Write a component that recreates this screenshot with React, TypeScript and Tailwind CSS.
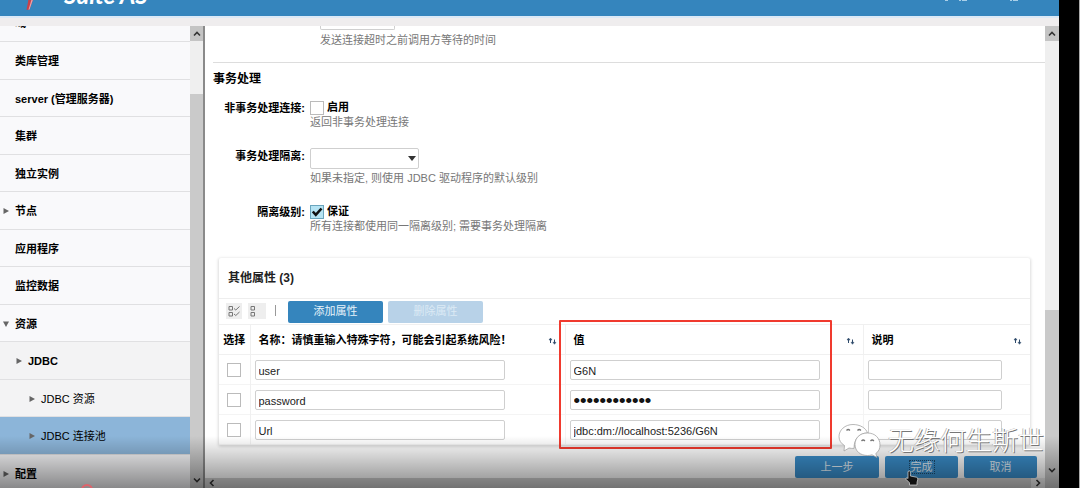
import React from "react";
import clsx from "clsx";

type NavItem = {
  label: string;
  level?: number;
  arrow?: "right" | "down";
  active?: boolean;
};

const navItems: NavItem[] = [
  { label: "类库管理" },
  { label: "server (管理服务器)" },
  { label: "集群" },
  { label: "独立实例" },
  { label: "节点", arrow: "right" },
  { label: "应用程序" },
  { label: "监控数据" },
  { label: "资源", arrow: "down" },
  { label: "JDBC", level: 1, arrow: "right" },
  { label: "JDBC 资源", level: 2, arrow: "right" },
  { label: "JDBC 连接池", level: 2, arrow: "right", active: true },
  { label: "配置", arrow: "right" },
];

const properties = [
  { name: "user", value: "G6N", type: "text" },
  { name: "password", value: "dmpassword12", type: "password" },
  { name: "Url", value: "jdbc:dm://localhost:5236/G6N", type: "text" },
];

const Triangle = ({ direction }: { direction?: "right" | "down" }) => (
  <svg viewBox="0 0 6 6" className="size-1.5 shrink-0" fill="#666">
    {direction === "right" && <path d="M0.5 0 6 3 0.5 6z" />}
    {direction === "down" && <path d="M0 0.5h6L3 6z" />}
  </svg>
);

const Chevron = ({ d }: { d: string }) => (
  <svg viewBox="0 0 8 8" className="size-2" fill="none" stroke="#333" strokeWidth="1.6">
    <path d={d} />
  </svg>
);

const SortIcon = () => (
  <svg viewBox="0 0 9 8" className="h-2 w-[9px]" fill="#2f4b6b" stroke="#2f4b6b" strokeWidth="1">
    <path d="M2.500 6V2.500M6.500 2.500V6" />
    <path d="M2.500 1 4 3H1zM6.500 7.300 5 5.300h3z" strokeWidth="0.5" />
  </svg>
);

type ScrollbarProps = { topClass: string; thumbClass: string; className?: string };

const Scrollbar = ({ topClass, thumbClass, className }: ScrollbarProps) => (
  <div className={clsx("flex shrink-0 flex-col bg-[#efefef]", className)}>
    <button aria-label="向上滚动" className="flex h-[15px] shrink-0 items-center justify-center bg-[#c4c4c4]">
      <Chevron d="M1 5.5 4 2.5l3 3" />
    </button>
    <div className={topClass} />
    <div className={clsx("bg-[#cacaca]", thumbClass)} />
    <button
      aria-label="向下滚动"
      className="mt-auto flex h-5 shrink-0 items-end justify-center bg-[#cacaca] pb-1"
    >
      <Chevron d="M1 2.5l3 3 3-3" />
    </button>
  </div>
);

const CheckBox = ({ label, checked }: { label: string; checked?: boolean }) => (
  <label className="flex h-[15px] items-center gap-[3px] font-bold text-black">
    <span className="relative size-3.5">
      <input
        type="checkbox"
        defaultChecked={checked}
        className="block size-3.5 appearance-none border border-[#bbb] bg-white checked:border-[#6aa5bd] checked:bg-[#b5e3f3]"
      />
      {checked && (
        <svg viewBox="0 0 14 14" className="pointer-events-none absolute inset-0" fill="none" stroke="#111" strokeWidth="2.6">
          <path d="M2.8 6.5 5.8 9.8 11.5 3.5" />
        </svg>
      )}
    </span>
    {label}
  </label>
);

const Hint = ({ children }: { children: React.ReactNode }) => (
  <p className="leading-[15px] text-[#777]">{children}</p>
);

const Field = ({ label, children }: { label: string; children: React.ReactNode }) => (
  <div className="flex items-start gap-[5px]">
    <span className="w-[100px] shrink-0 text-right font-bold leading-4 text-black">{label}</span>
    <div>{children}</div>
  </div>
);

const inputClass =
  "block h-5 rounded-[2px] border border-[#cfcfcf] bg-white px-[3px] pt-0.5 text-[11px] text-[#222]";

const PropertiesTable = () => (
  <table className="w-full table-fixed border-collapse text-left text-black">
    <colgroup>
      <col className="w-[31px]" />
      <col className="w-[315px]" />
      <col />
      <col className="w-[167px]" />
    </colgroup>
    <thead>
      <tr className="h-[30px] border-y border-[#f0f0f0]">
        <th className="pt-0.5 text-center">选择</th>
        {["名称：请慎重输入特殊字符，可能会引起系统风险！", "值", "说明"].map((title) => (
          <th key={title} className="border-l border-[#f0f0f0] pl-2 pr-2 pt-0.5">
            <span className="flex items-center justify-between whitespace-nowrap">
              {title}
              <button aria-label={`排序 ${title}`}>
                <SortIcon />
              </button>
            </span>
          </th>
        ))}
      </tr>
    </thead>
    <tbody>
      {properties.map((row) => (
        <tr key={row.name} className="h-[30px] border-b border-[#f4f4f4]">
          <td>
            <input
              type="checkbox"
              aria-label={`选择 ${row.name}`}
              className="mx-auto block size-3.5 appearance-none border border-[#bbb] bg-white"
            />
          </td>
          <td className="border-l border-[#f0f0f0] pl-1">
            <input aria-label="名称" defaultValue={row.name} className={clsx(inputClass, "w-[250px]")} />
          </td>
          <td className="border-l border-[#f4f4f4] pl-1">
            <input
              aria-label="值"
              type={row.type}
              defaultValue={row.value}
              className={clsx(
                inputClass,
                "w-[250px]",
                row.type === "password" && "font-['DejaVu_Sans',sans-serif] [-webkit-text-stroke:2px_#111]"
              )}
            />
          </td>
          <td className="border-l border-[#f4f4f4] pl-1">
            <input aria-label="说明" className={clsx(inputClass, "w-[134px]")} />
          </td>
        </tr>
      ))}
    </tbody>
  </table>
);

const Header = () => (
  <header className="shrink-0">
    <div className="flex h-4 items-end overflow-hidden bg-[#3585bd] pb-[11px] pl-6">
      <svg viewBox="0 0 12 20" className="-mb-1.5 h-5 w-3 shrink-0">
        <path d="M6 0h6L5.5 18.5 2.5 19z" fill="#c9404a" />
        <path d="M10 0h2L5.5 18.5l-1 .3z" fill="#e9a5ac" />
      </svg>
      <span className="ml-7 font-[Lato,sans-serif] text-[24px] font-bold italic leading-5 text-white">Suite AS</span>
      <svg viewBox="0 0 80 16" className="-mb-[11px] ml-auto mr-9 h-4 w-20 shrink-0" fill="#a9cfe8">
        <path d="M2 0h3v1H2zM16 0h2v1h-2zM19 0h5v1h-5zM67 0h2v1h-2zM70 0h5v1h-5z" />
      </svg>
    </div>
    <div className="h-0.5 bg-[#dbe9f7]" />
    <div className="h-2 bg-[#efedee]" />
  </header>
);

const Sidebar = () => (
  <nav className="w-[190px] shrink-0 overflow-hidden bg-[#f9f9fb]">
    <div className="flex h-4 items-end overflow-hidden border-b border-[#e0e0e2] pb-[10px] pl-[15px] font-bold leading-[15px]">
      域
    </div>
    <ul className="flex h-[450px] flex-col">
      {navItems.map((item) => (
        <li
          key={item.label}
          className={clsx(
            "flex-1 border-b border-[#e0e0e2]",
            item.level && !item.active && "bg-[#f3f3f4]",
            item.active && "bg-[#8cb5d9]"
          )}
        >
          <a
            href="#"
            className={clsx(
              "flex h-full items-center pt-0.5 text-black",
              item.level === 1 && "gap-1.5 pl-4 font-bold",
              item.level === 2 && "gap-1.5 pl-[29px] text-[#222]",
              !item.level && "gap-1.5 pl-[3px] font-bold"
            )}
          >
            <Triangle direction={item.arrow} />
            {item.label}
          </a>
        </li>
      ))}
    </ul>
  </nav>
);

const Watermark = () => (
  <div className="pointer-events-none absolute bottom-[29px] right-[36px] flex items-end gap-1.5">
    <svg viewBox="0 0 44 36" className="h-9 w-11" fill="#fff" stroke="#999" strokeWidth="0.7">
      <path d="M15 1.500C7 1.500 1 7 1 13.500c0 4 2 7 5.500 9L6 28l5-3c2 .4 3 .5 5 .4C16 15 22 10 29.500 10 28 5 22 1.500 15 1.500z" />
      <path d="M29.500 10C22 10 17 14.800 17 21.500s5.500 11 12.500 11c1.600 0 3-.2 4.500-.7l5 2.700-1.200-4c3-2 4.200-5 4.200-8.500C42 15 37 10 29.500 10z" />
      <path
        d="M8.500 7.500q1.700-2 3.400 0M19.500 7.500q1.700-2 3.400 0M23.500 18q1.700-2 3.400 0M32.500 18q1.700-2 3.400 0"
        fill="none"
        stroke="#777"
        strokeWidth="1.3"
      />
    </svg>
    <span className="text-[26px] font-light leading-9 text-white [text-shadow:1px_1px_0_#777,-1px_0_0_#bbb]">
      无缘何生斯世
    </span>
  </div>
);

const HandCursor = () => (
  <svg viewBox="0 0 14 16" className="pointer-events-none absolute left-5 top-3.5 z-10 h-4 w-3.5" fill="#111" stroke="#ddd" strokeWidth="0.7">
    <path d="M3 1.500q1.200-1.200 2.400 0V6l6 1.200q1.600.4 1.400 2L12 12.500V15H4.500v-2.200L1 9.300q-.3-1.600 1-1.600l1 .8z" />
  </svg>
);

const footerButton = "h-[22px] rounded-[2px] bg-[#3a8ecb] pt-px text-[#e4f0f8]";

const App: React.FC = () => {
  return (
    <div className="relative flex h-screen overflow-hidden bg-black font-['Liberation_Sans','Noto_Sans_CJK_SC',sans-serif] text-[11px]">
      <div className="flex min-w-0 flex-1 flex-col bg-white">
        <Header />
        <div className="flex min-h-0 flex-1">
          <Sidebar />
          <Scrollbar className="w-[13px]" topClass="h-[53px] shrink-0" thumbClass="min-h-0 flex-1" />
          <div className="w-0.5 shrink-0 bg-[#8a8a8a]" />

          <div className="flex min-w-0 flex-1 flex-col">
            <main className="min-h-0 flex-1 overflow-hidden">
              <div className="ml-[115px] h-1 w-[75px] rounded-b-[2px] border border-t-0 border-[#cfcfcf]" />
              <div className="mb-3.5 ml-[115px] mt-[3px]">
                <Hint>发送连接超时之前调用方等待的时间</Hint>
              </div>
              <hr className="ml-2 border-[#ddd]" />
              <h2 className="mt-2 pl-2 text-[12px] font-bold leading-4 text-black">事务处理</h2>

              <div className="mt-[13px] flex flex-col gap-[18px]">
                <Field label="非事务处理连接:">
                  <CheckBox label="启用" />
                  <Hint>返回非事务处理连接</Hint>
                </Field>
                <Field label="事务处理隔离:">
                  <div className="relative mb-0.5 w-[109px]">
                    <select
                      aria-label="事务处理隔离"
                      className="block h-[21px] w-full appearance-none rounded-[2px] border border-[#cfcfcf] bg-white"
                    />
                    <svg viewBox="0 0 8 5" className="pointer-events-none absolute right-[3px] top-2 h-[5px] w-2" fill="#333">
                      <path d="M0 0h8L4 5z" />
                    </svg>
                  </div>
                  <Hint>如果未指定, 则使用 JDBC 驱动程序的默认级别</Hint>
                </Field>
                <Field label="隔离级别:">
                  <CheckBox label="保证" checked />
                  <Hint>所有连接都使用同一隔离级别; 需要事务处理隔离</Hint>
                </Field>
              </div>

              <section className="relative ml-3.5 mr-[15px] mt-6 rounded-[2px] bg-white shadow-[0_1px_3px_1px_#ddd]">
                <h3 className="flex h-10 items-center pl-[9px] text-[12px] font-bold text-[#222]">其他属性 (3)</h3>
                <div className="flex h-[26px] items-center border-t border-[#eee] pl-[7px]">
                  <button aria-label="全选" className="mb-0.5 flex size-4 items-center justify-center bg-[#eee]">
                    <svg viewBox="0 0 12 12" className="size-3" fill="none" stroke="#777" strokeWidth="1">
                      <path d="M1 1.500h3.500V5H1zM1 7.500h3.500V11H1zM6 3.500 7.800 5 11.500 1.500M6 9l1.800 1.500 3.700-3.500" />
                    </svg>
                  </button>
                  <button aria-label="取消全选" className="mb-0.5 ml-1.5 flex h-4 w-[18px] items-center bg-[#eee] pl-0.5">
                    <svg viewBox="0 0 12 12" className="size-3" fill="none" stroke="#777" strokeWidth="1">
                      <path d="M1 1.500h3.500V5H1zM1 7.500h3.500V11H1z" />
                    </svg>
                  </button>
                  <div className="mb-0.5 ml-[9px] h-[11px] w-px bg-[#999]" />
                  <button className="ml-3 h-[22px] w-[95px] rounded-[2px] bg-[#3585bd] text-[#e8f3fa]">添加属性</button>
                  <button disabled className="ml-[5px] h-[22px] w-[95px] rounded-[2px] bg-[#b8d2e8] text-[#dceaf5]">
                    删除属性
                  </button>
                </div>
                <PropertiesTable />
                {/* highlight around the value column */}
                <div className="pointer-events-none absolute -bottom-1 left-[340px] right-[198px] top-[62px] rounded-[1px] border-2 border-[#f03a2e]" />
              </section>
            </main>

            <footer className="flex shrink-0 justify-end gap-1.5 pr-2">
              <button className={clsx(footerButton, "w-[84px]")}>上一步</button>
              <div className="relative">
                <button className={clsx(footerButton, "w-[73px]")}>
                  <span className="px-px outline-1 outline-dotted outline-[#1d4a6b]">完成</span>
                </button>
                <HandCursor />
              </div>
              <button className={clsx(footerButton, "w-[73px]")}>取消</button>
            </footer>
            <div className="flex h-2.5 shrink-0 items-center justify-between bg-[#d0d0d0]">
              <button aria-label="向左滚动" className="pl-[3px]">
                <Chevron d="M5.500 1l-3 3 3 3" />
              </button>
              <button aria-label="向右滚动" className="flex h-full w-[14px] items-center justify-center bg-[#eee]">
                <Chevron d="M2.500 1l3 3-3 3" />
              </button>
            </div>
          </div>
          <div className="flex shrink-0 flex-col bg-[#cacaca]">
            <Scrollbar className="w-3.5 flex-1" topClass="h-[269px] shrink-0" thumbClass="min-h-0 flex-1" />
            <div className="h-2.5" />
          </div>
        </div>
      </div>
      <div className="w-[21px] shrink-0 border-r border-[#aaa] bg-black" />

      {/* player shade along the bottom edge */}
      <div className="pointer-events-none absolute bottom-0 left-0 right-[21px] h-[52px] bg-linear-to-b from-transparent to-black/45" />
      <div className="pointer-events-none absolute -bottom-2 left-[81px] size-3 rounded-full border-2 border-[#e0626a]" />
      <Watermark />
    </div>
  );
};

export default App;
